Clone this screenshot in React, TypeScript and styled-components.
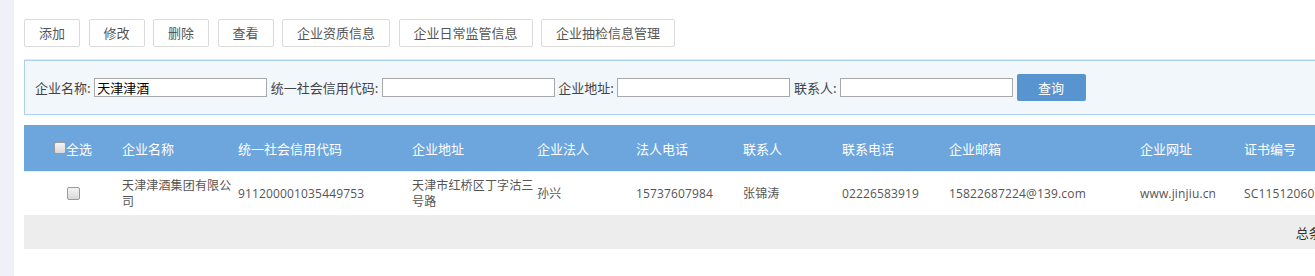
import React from "react";
import styled, { createGlobalStyle } from "styled-components";

const Global = createGlobalStyle`
  html, body { margin: 0; padding: 0; background: #fff; overflow: hidden; }
  body { font-family: "Noto Sans CJK SC", "Microsoft YaHei", sans-serif; font-size: 13px; color: #333; }
  * { box-sizing: border-box; }
`;

const Page = styled.div`
  display: flex;
  min-height: 276px;
  width: 1400px;
`;

const SideStrip = styled.div`
  width: 14px;
  flex: none;
  background: #eff1f9;
`;

const Main = styled.div`
  padding-left: 10px;
  flex: none;
  width: 1365px;
`;

const Toolbar = styled.div`
  display: flex;
  gap: 8.5px;
  padding: 19px 0 12px;
  border-bottom: 1px solid #e8e8e8;
`;

const ToolButton = styled.button`
  height: 28px;
  padding: 0 14px;
  background: #fff;
  border: 1px solid #dadada;
  border-radius: 2px;
  color: #555;
  font-family: inherit;
  font-size: 13px;
  line-height: 26px;
  cursor: pointer;
`;

const SearchPanel = styled.div`
  display: flex;
  align-items: center;
  height: 55px;
  padding-left: 10px;
  background: #f2f7fc;
  border: 1px solid #aad0f2;
  border-right: none;
`;

const Field = styled.label`
  display: flex;
  align-items: center;
  gap: 3.5px;
  margin-right: 3.5px;
  color: #444;
  font-size: 13px;
  line-height: 18px;
`;

const TextInput = styled.input`
  width: 173px;
  height: 19px;
  padding: 0 2px;
  border: 1px solid #a9a9a9;
  background: #fff;
  color: #000;
  font-family: inherit;
  font-size: 13px;
  line-height: 17px;
  outline: none;
`;

const QueryButton = styled.button`
  width: 69px;
  height: 27px;
  background: #5894d0;
  border: none;
  border-radius: 2px;
  color: #fff;
  font-family: inherit;
  font-size: 13px;
  cursor: pointer;
`;

const cols = "98px 116px 174px 125px 99px 107px 99px 107px 191px 104px 121px";

const Table = styled.div`
  margin-top: 10px;
  width: 1341px;
`;

const HeaderRow = styled.div`
  display: grid;
  grid-template-columns: ${cols};
  height: 47px;
  align-items: center;
  background: #6ca6dc;
  color: #fff;
  font-size: 13px;
  border-bottom: 1px solid #e6eef7;
`;

const BodyRow = styled.div`
  display: grid;
  grid-template-columns: ${cols};
  height: 43px;
  align-items: center;
  background: #fff;
  color: #555;
  font-family: "Open Sans", "Noto Sans CJK SC", sans-serif;
  font-size: 12px;
  line-height: 16px;
  letter-spacing: 0.15px;
`;

const Cell = styled.div<{ $center?: boolean }>`
  display: flex;
  align-items: center;
  justify-content: ${(p) => (p.$center ? "center" : "flex-start")};
  padding-right: ${(p) => (p.$center ? 0 : 2)}px;
  white-space: normal;
  word-break: break-all;
`;

const Check = styled.input.attrs({ type: "checkbox" })<{ $size?: number }>`
  appearance: none;
  -webkit-appearance: none;
  margin: 0;
  width: ${(p) => p.$size ?? 13}px;
  height: ${(p) => p.$size ?? 13}px;
  border: 1px solid #9a9a9a;
  border-radius: 2px;
  background: linear-gradient(#f4f4f4, #d9d9d9);
  flex: none;
`;

const Footer = styled.div`
  display: flex;
  justify-content: flex-end;
  align-items: center;
  height: 34px;
  padding-right: 10px;
  background: #ededed;
  color: #333;
  font-size: 13px;
`;

const headers = [
  "企业名称",
  "统一社会信用代码",
  "企业地址",
  "企业法人",
  "法人电话",
  "联系人",
  "联系电话",
  "企业邮箱",
  "企业网址",
  "证书编号",
];

const row = [
  "天津津酒集团有限公司",
  "911200001035449753",
  "天津市红桥区丁字沽三号路",
  "孙兴",
  "15737607984",
  "张锦涛",
  "02226583919",
  "15822687224@139.com",
  "www.jinjiu.cn",
  "SC11512060100011",
];

export default function App() {
  return (
    <>
      <Global />
      <Page>
        <SideStrip />
        <Main>
          <Toolbar>
            {["添加", "修改", "删除", "查看", "企业资质信息", "企业日常监管信息", "企业抽检信息管理"].map((t) => (
              <ToolButton key={t}>{t}</ToolButton>
            ))}
          </Toolbar>
          <SearchPanel>
            <Field>
              企业名称:
              <TextInput defaultValue="天津津酒" />
            </Field>
            <Field>
              统一社会信用代码:
              <TextInput />
            </Field>
            <Field>
              企业地址:
              <TextInput />
            </Field>
            <Field>
              联系人:
              <TextInput />
            </Field>
            <QueryButton>查询</QueryButton>
          </SearchPanel>
          <Table>
            <HeaderRow>
              <Cell $center>
                <Check $size={12} />
                全选
              </Cell>
              {headers.map((h) => (
                <Cell key={h}>{h}</Cell>
              ))}
            </HeaderRow>
            <BodyRow>
              <Cell $center>
                <Check />
              </Cell>
              {row.map((v) => (
                <Cell key={v}>{v}</Cell>
              ))}
            </BodyRow>
            <Footer>总条数：1</Footer>
          </Table>
        </Main>
      </Page>
    </>
  );
}
